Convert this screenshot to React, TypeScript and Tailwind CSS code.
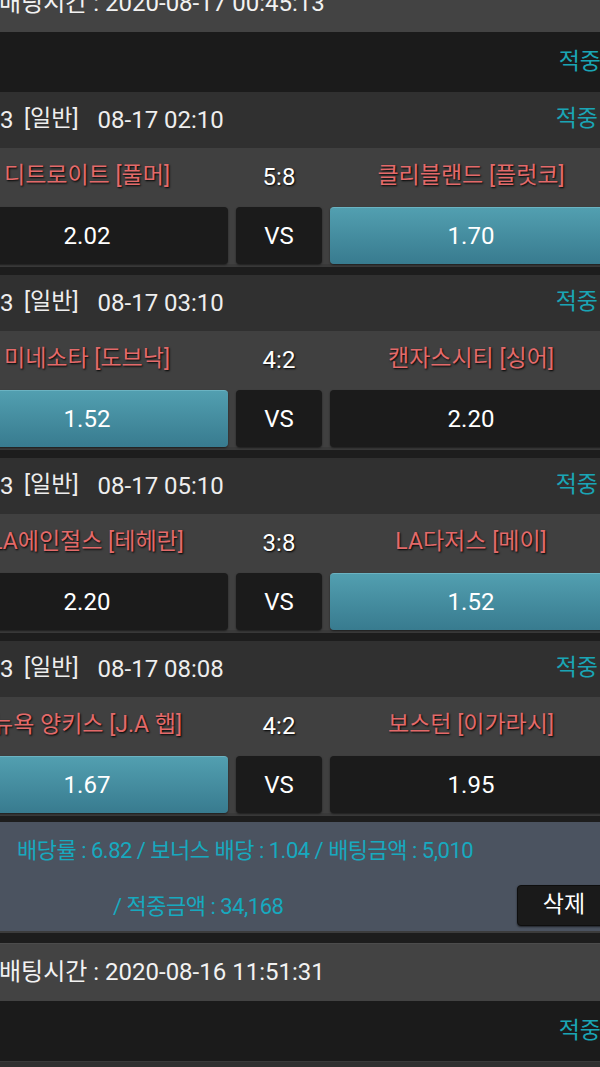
import React from "react";

type Game = {
  id: string;
  time: string;
  home: string;
  away: string;
  score: string;
  homeOdds: string;
  awayOdds: string;
  pick: "home" | "away";
};

const games: Game[] = [
  { id: "27583", time: "08-17 02:10", home: "디트로이트 [풀머]", away: "클리블랜드 [플럿코]", score: "5:8", homeOdds: "2.02", awayOdds: "1.70", pick: "away" },
  { id: "27583", time: "08-17 03:10", home: "미네소타 [도브낙]", away: "캔자스시티 [싱어]", score: "4:2", homeOdds: "1.52", awayOdds: "2.20", pick: "home" },
  { id: "27583", time: "08-17 05:10", home: "LA에인절스 [테헤란]", away: "LA다저스 [메이]", score: "3:8", homeOdds: "2.20", awayOdds: "1.52", pick: "away" },
  { id: "27583", time: "08-17 08:08", home: "뉴욕 양키스 [J.A 햅]", away: "보스턴 [이가라시]", score: "4:2", homeOdds: "1.67", awayOdds: "1.95", pick: "home" },
];

const font = { fontFamily: 'Roboto, "Noto Sans CJK KR", sans-serif' };

const OddsBox = ({ value, active }: { value: string; active: boolean }) => (
  <div
    className={
      active
        ? "h-[57px] rounded-[4px] flex items-center justify-center text-white text-[24px] bg-gradient-to-b from-[#529fb0] to-[#387b8f] border-t border-[#6bb3c2] shadow-[0_1px_2px_rgba(0,0,0,0.5)]"
        : "h-[57px] rounded-[4px] flex items-center justify-center text-white text-[24px] bg-[#1b1b1b] shadow-[0_1px_2px_rgba(0,0,0,0.5)]"
    }
  >
    {value}
  </div>
);

const GameRow = ({ game }: { game: Game }) => (
  <div>
    <div className="h-[56px] bg-[#303030] flex items-center justify-between pr-[14px] text-[24px] text-[#eeeeee]">
      <div className="flex items-center -mt-[1px]">
        <span className="w-[59px] text-right">{game.id}</span>
        <span className="ml-[19px] text-[23px]">[일반]</span>
        <span className="ml-[19px]">{game.time}</span>
      </div>
      <span className="text-[#1aa5b5] text-[23px] -mt-[2px]">적중</span>
    </div>
    <div className="bg-[#404040]">
      <div className="h-[57px] grid grid-cols-[282px_86px_282px] gap-[8px] items-center text-[23px] [text-shadow:1px_1px_2px_#000]">
        <div className="text-center text-[#e36a6a]">{game.home}</div>
        <div className="text-center text-white text-[24px]">{game.score}</div>
        <div className="text-center text-[#e36a6a]">{game.away}</div>
      </div>
      <div className="pt-[2px] grid grid-cols-[282px_86px_282px] gap-[8px]">
        <OddsBox value={game.homeOdds} active={game.pick === "home"} />
        <div className="h-[57px] rounded-[4px] flex items-center justify-center text-white text-[24px] bg-[#1b1b1b] shadow-[0_1px_2px_rgba(0,0,0,0.5)]">
          VS
        </div>
        <OddsBox value={game.awayOdds} active={game.pick === "away"} />
      </div>
      <div className="h-[3px] bg-[#3a3a3a]" />
    </div>
    <div className="h-[8px] bg-[#1d1d1d]" />
  </div>
);

const GroupHeader = ({ time, first }: { time: string; first?: boolean }) => (
  <div className={first ? "-mt-[26px]" : ""}>
    <div className="h-[58px] bg-[#434343] border-t border-[#4c4c4c] flex items-center pl-[53px] text-[24px] text-[#f2f2f2]">
      <span className="-mt-[1px]">배팅시간 : {time}</span>
    </div>
    <div className="h-[60px] bg-[#1b1b1b] flex items-center justify-end pr-[11px] text-[23px] text-[#1aa5b5]">
      적중
    </div>
  </div>
);

export default function App() {
  return (
    <div className="w-[600px] h-[1067px] overflow-hidden bg-[#1d1d1d]" style={font}>
      <div className="w-[666px] -ml-[54px]">
        <GroupHeader time="2020-08-17 00:45:13" first />
        {games.map((g, i) => (
          <GameRow key={i} game={g} />
        ))}
        <div className="h-[109px] bg-[#4b5360] relative text-[22px] tracking-[-0.5px] text-[#17a9bf] -mt-[2px]">
          <div className="pt-[12px] pl-[71px]">배당률 : 6.82 / 보너스 배당 : 1.04 / 배팅금액 : 5,010</div>
          <div className="pt-[23px] pl-[167px]">/ 적중금액 : 34,168</div>
          <button className="absolute left-[571px] top-[63px] w-[94px] h-[41px] rounded-[4px] bg-[#1a1a1a] border border-[#0e0e0e] text-white text-[23px] tracking-normal shadow-[0_1px_2px_rgba(0,0,0,0.6)]">
            삭제
          </button>
        </div>
        <div className="h-[2px] bg-[#3c3c3c]" />
        <div className="h-[10px] bg-[#1d1d1d]" />
        <GroupHeader time="2020-08-16 11:51:31" />
        <div className="h-[1px] bg-[#3a3a3a]" />
        <div className="h-[56px] bg-[#303030]" />
      </div>
    </div>
  );
}
